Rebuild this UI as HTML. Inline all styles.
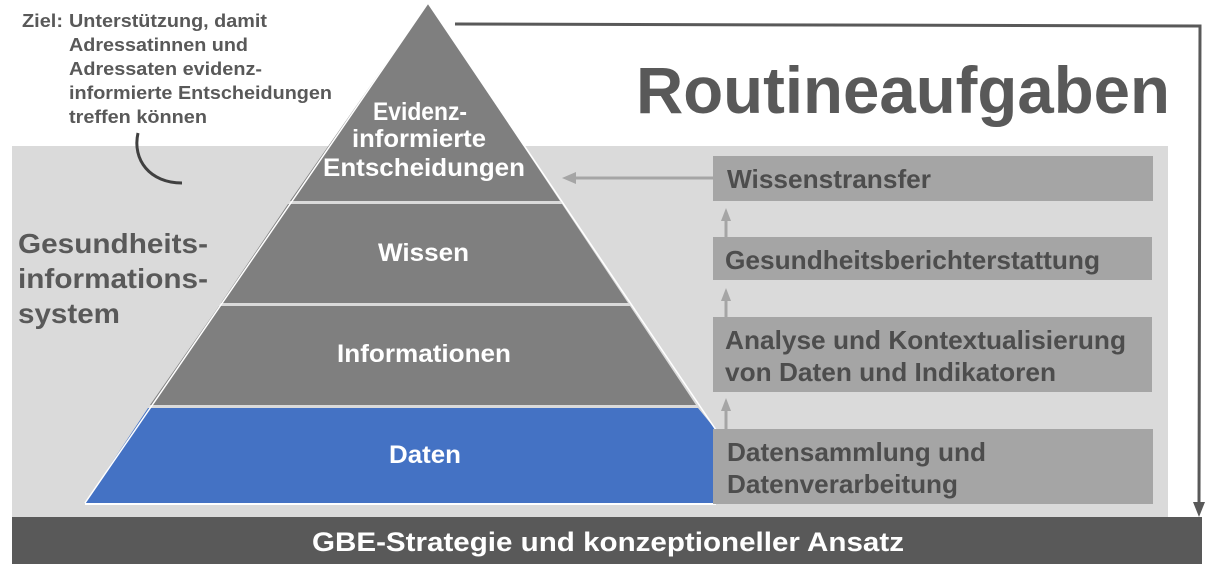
<!DOCTYPE html>
<html><head><meta charset="utf-8"><style>
html,body{margin:0;padding:0;background:#fff;width:1212px;height:576px;overflow:hidden}
svg{display:block}
text{font-family:"Liberation Sans",sans-serif;font-weight:bold}
</style></head><body>
<svg width="1212" height="576" viewBox="0 0 1212 576">
<rect x="12" y="146" width="1156" height="372" fill="#dadada"/>
<polygon points="428,3 560,201 290,201" fill="#7f7f7f"/>
<polygon points="288,204 562,204 628,303 221,303" fill="#7f7f7f"/>
<polygon points="219,306 630,306 696,405 150,405" fill="#7f7f7f"/>
<polygon points="148,408 698,408 716,430 716,503 85,503" fill="#4472c4"/>
<path d="M428,3 L85,503 M428,3 L716,430" stroke="#fff" stroke-width="1.5" fill="none"/>
<line x1="85" y1="504" x2="716" y2="504" stroke="#fff" stroke-width="2"/>
<g fill="#fff" font-size="25">
<text x="373" y="120" textLength="94" lengthAdjust="spacingAndGlyphs">Evidenz-</text>
<text x="352" y="147" textLength="134" lengthAdjust="spacingAndGlyphs">informierte</text>
<text x="323" y="176" textLength="202" lengthAdjust="spacingAndGlyphs">Entscheidungen</text>
<text x="378" y="261" textLength="91" lengthAdjust="spacingAndGlyphs">Wissen</text>
<text x="337" y="362" textLength="174" lengthAdjust="spacingAndGlyphs">Informationen</text>
<text x="389" y="463" textLength="72" lengthAdjust="spacingAndGlyphs">Daten</text>
</g>
<rect x="713" y="156" width="440" height="45" fill="#a5a5a5"/>
<rect x="713" y="237" width="439" height="43" fill="#a5a5a5"/>
<rect x="713" y="317" width="439" height="75" fill="#a5a5a5"/>
<rect x="713" y="429" width="440" height="75" fill="#a5a5a5"/>
<g fill="#4d4d4d" font-size="26">
<text x="727" y="188" textLength="204" lengthAdjust="spacingAndGlyphs">Wissenstransfer</text>
<text x="725" y="269" textLength="375" lengthAdjust="spacingAndGlyphs">Gesundheitsberichterstattung</text>
<text x="725" y="349" textLength="401" lengthAdjust="spacingAndGlyphs">Analyse und Kontextualisierung</text>
<text x="725" y="381" textLength="331" lengthAdjust="spacingAndGlyphs">von Daten und Indikatoren</text>
<text x="727" y="461" textLength="259" lengthAdjust="spacingAndGlyphs">Datensammlung und</text>
<text x="727" y="493" textLength="231" lengthAdjust="spacingAndGlyphs">Datenverarbeitung</text>
</g>
<g stroke="#a5a5a5" stroke-width="3" fill="#a5a5a5">
<line x1="713" y1="178" x2="575" y2="178"/>
<line x1="726" y1="237" x2="726" y2="220"/>
<line x1="726" y1="317" x2="726" y2="300"/>
<line x1="726" y1="429" x2="726" y2="410"/>
</g>
<g fill="#a5a5a5">
<polygon points="562,178 576,172 576,184"/>
<polygon points="726,208 721,221 731,221"/>
<polygon points="726,288 721,301 731,301"/>
<polygon points="726,398 721,411 731,411"/>
</g>
<path d="M455,24 L1200,26 L1199,505" stroke="#595959" stroke-width="3" fill="none"/>
<polygon points="1199,517 1193,502 1205,502" fill="#595959"/>
<text x="636" y="113" font-size="66" fill="#595959" textLength="534" lengthAdjust="spacingAndGlyphs">Routineaufgaben</text>
<g fill="#595959" font-size="18">
<text x="22" y="27" textLength="41" lengthAdjust="spacingAndGlyphs">Ziel:</text>
<text x="69" y="27" textLength="198" lengthAdjust="spacingAndGlyphs">Unterstützung, damit</text>
<text x="69" y="51" textLength="179" lengthAdjust="spacingAndGlyphs">Adressatinnen und</text>
<text x="69" y="75" textLength="193" lengthAdjust="spacingAndGlyphs">Adressaten evidenz-</text>
<text x="69" y="99" textLength="263" lengthAdjust="spacingAndGlyphs">informierte Entscheidungen</text>
<text x="69" y="123" textLength="138" lengthAdjust="spacingAndGlyphs">treffen können</text>
</g>
<path d="M138,133 C132,160 150,183 182,183" stroke="#404040" stroke-width="3" fill="none"/>
<g fill="#595959" font-size="28">
<text x="18" y="253" textLength="190" lengthAdjust="spacingAndGlyphs">Gesundheits-</text>
<text x="18" y="288" textLength="190" lengthAdjust="spacingAndGlyphs">informations-</text>
<text x="18" y="323" textLength="102" lengthAdjust="spacingAndGlyphs">system</text>
</g>
<rect x="12" y="517" width="1190" height="47" fill="#595959"/>
<text x="312" y="551" font-size="27" fill="#fff" textLength="592" lengthAdjust="spacingAndGlyphs">GBE-Strategie und konzeptioneller Ansatz</text>
</svg>
</body></html>
